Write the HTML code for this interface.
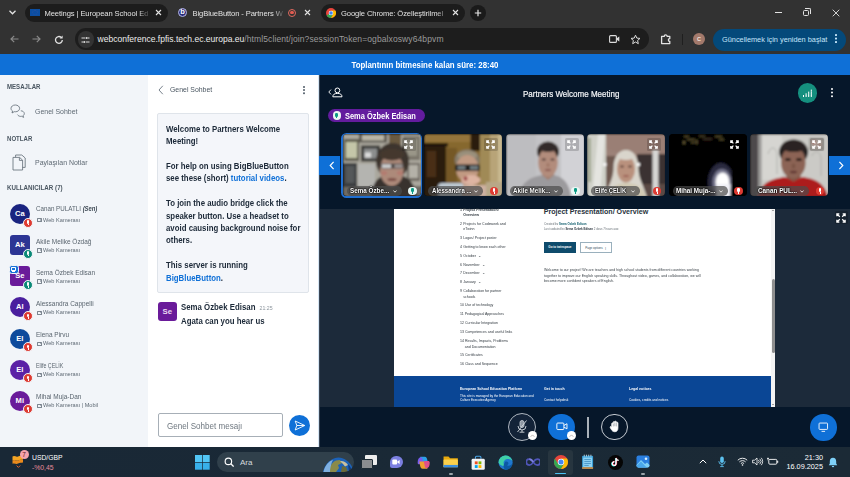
<!DOCTYPE html>
<html><head><meta charset="utf-8">
<style>
*{box-sizing:border-box;margin:0;padding:0}
html,body{width:850px;height:477px;overflow:hidden;background:#06172a;font-family:"Liberation Sans",sans-serif;}
.abs{position:absolute}
#root{position:relative;width:850px;height:477px;overflow:hidden}
/* chrome */
#tabs{left:0;top:0;width:850px;height:26px;background:#323232}
#tool{left:0;top:26px;width:850px;height:28px;background:#323232}
.tab{position:absolute;top:4px;height:18px;border-radius:9px;background:#1c1c1c}
.tt{position:absolute;font-size:7.6px;color:#e3e3e3;white-space:nowrap;top:9px;line-height:9px;letter-spacing:-0.1px}
#omni{left:75px;top:28.3px;width:574px;height:21.7px;border-radius:11px;background:#1d1d1d}
/* bbb */
#bluebar{left:0;top:53.5px;width:850px;height:21.3px;background:#0f70d7;color:#fff;font-size:9px;font-weight:bold;text-align:center;line-height:22.6px}
#users{left:0;top:75px;width:148px;height:372px;background:#f2f5f9}
#chat{left:148px;top:75px;width:171px;height:372px;background:#fff}
#main{left:319px;top:75px;width:531px;height:372px;background:#06172a}
.h{position:absolute;left:7px;font-size:7px;font-weight:bold;color:#4e5a66;letter-spacing:0.1px}
.it{position:absolute;left:35px;font-size:7.6px;color:#5b6670}
.un{position:absolute;left:36px;font-size:6.9px;color:#56616c;white-space:nowrap}
.us{position:absolute;left:36px;font-size:5.8px;color:#6c7782;white-space:nowrap}
.av{position:absolute;left:10px;width:19px;height:19px;border-radius:50%;color:#fff;font-size:7.5px;font-weight:bold;text-align:center;line-height:19px}
.bd{position:absolute;width:9px;height:9px;border-radius:50%;border:1px solid #f2f5f9}

.sx{display:inline-block;transform-origin:0 50%;white-space:nowrap}
.hd{position:absolute;left:7px;font-size:7.5px;line-height:9px;font-weight:bold;color:#4a5661}
.hd .sx{transform:scaleX(.81)}
.it{position:absolute;left:35px;font-size:7.6px;line-height:10px;color:#5e6973}
.it .sx{transform:scaleX(.915)}
.un{position:absolute;left:36.2px;font-size:7px;line-height:9px;color:#5a656f;white-space:nowrap}
.un .sx{transform:scaleX(.925)}
.us{position:absolute;left:43px;font-size:5.8px;line-height:8px;color:#5e6974;white-space:nowrap}
.us .sx{transform:scaleX(.97)}
.us:before{content:"";position:absolute;left:-6.5px;top:2.5px;width:3px;height:2.4px;border:0.55px solid #7d8791;border-radius:0.6px}
.us:after{content:"";position:absolute;left:-3px;top:3px;width:0;height:0;border:1.2px solid transparent;border-right-color:#6a7580;border-left:0}
.av{position:absolute;left:9.8px;width:20px;height:20px;border-radius:50%;color:#fff;font-size:7.6px;font-weight:bold;text-align:center;line-height:20px}
.av.m{border-radius:3px}
.bd{position:absolute;left:23.3px;width:10px;height:10px;border-radius:50%;border:1px solid #f2f5f9;background:#de3b32}
.bd.g{background:#0b8a78}
.bd:after{content:"";position:absolute;left:2.9px;top:1.5px;width:2.2px;height:3.6px;border-radius:1.1px;background:#fff}
.bd:before{content:"";position:absolute;left:3.65px;top:5.2px;width:0.7px;height:1.6px;background:#fff}
.ct{position:absolute;left:165.8px;font-size:8.4px;line-height:12.42px;font-weight:bold;color:#1c2938;white-space:nowrap}
.ct .sx{transform:scaleX(.935)}
.ct b{color:#0f70d7}

.vid{position:absolute;top:134.4px;width:78px;height:61.4px;border-radius:4px;overflow:hidden;background:#000}
.vid svg{position:absolute;left:0;top:0}
.vn{position:absolute;top:186.2px;font-size:7.6px;line-height:9px;font-weight:bold;color:#fff;white-space:nowrap;text-shadow:0 0 1.5px #000,0 0 1.5px #000,0 0 2px #000}
.vn .sx{transform:scaleX(.95)}
.fs{position:absolute;top:137.6px;width:14.4px;height:13.8px;border-radius:1.5px;background:rgba(0,0,0,.17)}
.mic{position:absolute;top:187px;width:8.4px;height:8.4px;border-radius:50%;background:#de3b32}
.mic.g{background:#e9f7f4}
.mic:after{content:"";position:absolute;left:2.9px;top:1.3px;width:2.6px;height:3.9px;border-radius:1.3px;background:#fff}
.mic.g:after{background:#0b9a84}
.mic:before{content:"";position:absolute;left:3.8px;top:5.2px;width:0.8px;height:1.8px;background:#fff}
.mic.g:before{background:#0b9a84}
.ab{position:absolute;border-radius:50%}

.nv{position:absolute;left:459.8px;font-size:14.2px;line-height:20px;color:#30383f;white-space:nowrap;transform:scale(.25);transform-origin:0 0}
.nv i{font-style:normal;display:inline-block;min-width:12.8px;padding-right:4px}
.pt{position:absolute;font-size:14.2px;line-height:20px;color:#3a4248;white-space:nowrap;transform:scale(.25);transform-origin:0 0}
.ft{position:absolute;font-size:12.6px;line-height:18.4px;color:#fff;white-space:nowrap;transform:scale(.25);transform-origin:0 0}

.tk{position:absolute;font-size:7.4px;line-height:9px;color:#fff;white-space:nowrap}
/* taskbar */
#task{left:0;top:447px;width:850px;height:30px;background:linear-gradient(90deg,#192836,#1b2a36)}
</style></head><body><div id="root">
<div id="tabs" class="abs"></div>
<div id="tool" class="abs"></div>
<div id="omni" class="abs"></div>
<!-- tab strip -->
<svg class="abs" style="left:8px;top:9px" width="9" height="7" viewBox="0 0 9 7"><path d="M1.5 1.8 L4.5 4.8 L7.5 1.8" stroke="#e3e3e3" stroke-width="1.3" fill="none"/></svg>
<div class="tab" style="left:25px;width:143px"></div>
<div class="abs" style="left:30px;top:9px;width:10px;height:7px;background:#0b4ea2"></div>
<div class="abs" style="left:32px;top:10px;width:6px;height:5px;border:1px dotted #274f9e;border-radius:50%"></div>
<div class="tt" style="left:44.5px;width:106px;overflow:hidden;-webkit-mask-image:linear-gradient(90deg,#000 88%,transparent)">Meetings | European School Ed</div>
<svg class="abs" style="left:155px;top:9px" width="7" height="7" viewBox="0 0 7 7"><path d="M1 1 L6 6 M6 1 L1 6" stroke="#e3e3e3" stroke-width="1.1"/></svg>

<div class="abs" style="left:178px;top:8px;width:9px;height:9px;border-radius:50%;background:#2a2d7c;border:1px solid #b9bbe6"></div>
<div class="abs" style="left:180.3px;top:7.4px;font-size:7.5px;font-weight:bold;color:#fff;line-height:9px">b</div>
<div class="tt" style="left:192.5px;width:92px;overflow:hidden;-webkit-mask-image:linear-gradient(90deg,#000 88%,transparent)">BigBlueButton - Partners W</div>
<div class="abs" style="left:288px;top:8.5px;width:8px;height:8px;border-radius:50%;border:1px solid #e06a5f"></div>
<div class="abs" style="left:290.3px;top:10.8px;width:3.4px;height:3.4px;border-radius:50%;background:#e35b50"></div>
<svg class="abs" style="left:304px;top:9px" width="7" height="7" viewBox="0 0 7 7"><path d="M1 1 L6 6 M6 1 L1 6" stroke="#e3e3e3" stroke-width="1.1"/></svg>

<div class="tab" style="left:321px;width:144px"></div>
<svg class="abs" style="left:326px;top:7.5px" width="10" height="10" viewBox="0 0 10 10"><circle cx="5" cy="5" r="5" fill="#e8453c"/><path d="M5 5 L0.7 7.5 A5 5 0 0 0 5 10 Z" fill="#34a853"/><path d="M0.7 7.5 A5 5 0 0 0 5 10 L7.5 5.6 L5 5Z" fill="#34a853"/><path d="M5 10 A5 5 0 0 0 9.35 2.5 L5 2.5 L7.2 6.2 Z" fill="#fbbc05"/><circle cx="5" cy="5" r="2.3" fill="#fff"/><circle cx="5" cy="5" r="1.8" fill="#4285f4"/></svg>
<div class="tt" style="left:341px;width:110px;overflow:hidden;-webkit-mask-image:linear-gradient(90deg,#000 86%,transparent)">Google Chrome: Özelleştirilmel</div>
<svg class="abs" style="left:452px;top:9px" width="7" height="7" viewBox="0 0 7 7"><path d="M1 1 L6 6 M6 1 L1 6" stroke="#e3e3e3" stroke-width="1.1"/></svg>
<div class="abs" style="left:469.5px;top:4.5px;width:16px;height:16px;border-radius:50%;background:#1a1a1a"></div>
<svg class="abs" style="left:473.5px;top:8.5px" width="8" height="8" viewBox="0 0 8 8"><path d="M4 0.8 V7.2 M0.8 4 H7.2" stroke="#e3e3e3" stroke-width="1.2"/></svg>
<!-- window controls -->
<div class="abs" style="left:775px;top:12px;width:7px;height:1px;background:#e3e3e3"></div>
<div class="abs" style="left:803px;top:9.5px;width:6px;height:6px;border:1px solid #e3e3e3;border-radius:1.5px"></div>
<div class="abs" style="left:804.5px;top:8px;width:6px;height:6px;border-top:1px solid #e3e3e3;border-right:1px solid #e3e3e3;border-radius:0 2px 0 0"></div>
<svg class="abs" style="left:832px;top:8.5px" width="8" height="8" viewBox="0 0 8 8"><path d="M0.7 0.7 L7.3 7.3 M7.3 0.7 L0.7 7.3" stroke="#e3e3e3" stroke-width="0.9"/></svg>
<!-- toolbar -->
<svg class="abs" style="left:9.5px;top:35px" width="9" height="8" viewBox="0 0 9 8"><path d="M4.2 0.8 L1 4 L4.2 7.2 M1 4 H8.5" stroke="#8a8a8a" stroke-width="1.2" fill="none"/></svg>
<svg class="abs" style="left:31.5px;top:35px" width="9" height="8" viewBox="0 0 9 8"><path d="M4.8 0.8 L8 4 L4.8 7.2 M8 4 H0.5" stroke="#8a8a8a" stroke-width="1.2" fill="none"/></svg>
<svg class="abs" style="left:53.5px;top:34.5px" width="10" height="10" viewBox="0 0 10 10"><path d="M8.3 5 A3.4 3.4 0 1 1 7.2 2.4" stroke="#e3e3e3" stroke-width="1.3" fill="none"/><path d="M5.6 3.4 H8.6 V0.4 Z" fill="#e3e3e3"/></svg>
<div class="abs" style="left:77.5px;top:31px;width:16.5px;height:16.5px;border-radius:50%;background:#333"></div>
<svg class="abs" style="left:81px;top:35.5px" width="9" height="8" viewBox="0 0 9 8"><path d="M0.5 2 H4 M6.8 2 H8.5 M0.5 6 H2 M5 6 H8.5" stroke="#dcdcdc" stroke-width="1.1"/><circle cx="5.6" cy="2" r="1.1" fill="#dcdcdc"/><circle cx="3.3" cy="6" r="1.1" fill="#dcdcdc"/></svg>
<div class="abs" style="left:97.5px;top:34px;font-size:8.55px;line-height:11px;color:#9a9a9a;white-space:nowrap"><span style="color:#ececec">webconference.fpfis.tech.ec.europa.eu</span><span style="letter-spacing:0.08px">/html5client/join?sessionToken=ogbalxoswy64bpvm</span></div>
<svg class="abs" style="left:609px;top:35px" width="11" height="8" viewBox="0 0 11 8"><rect x="0.6" y="0.6" width="6.8" height="6.8" rx="1" stroke="#dcdcdc" stroke-width="1.1" fill="none"/><path d="M7.6 3.2 L10.3 1.4 V6.6 L7.6 4.8Z" fill="#dcdcdc"/></svg>
<svg class="abs" style="left:629.5px;top:33.5px" width="11" height="11" viewBox="0 0 11 11"><path d="M5.5 1.2 L6.8 4.1 L10 4.4 L7.6 6.5 L8.3 9.7 L5.5 8 L2.7 9.7 L3.4 6.5 L1 4.4 L4.2 4.1 Z" stroke="#dcdcdc" stroke-width="1" fill="none" stroke-linejoin="round"/></svg>
<svg class="abs" style="left:660px;top:32.8px" width="12" height="12" viewBox="0 0 12 12"><path d="M1.6 3.4 H4.2 A1.5 1.5 0 0 1 7.2 3.4 H9.8 V5.6 A1.45 1.45 0 0 0 9.8 8.5 V10.6 H1.6 Z" stroke="#e3e3e3" stroke-width="1.3" fill="none" stroke-linejoin="round"/></svg>
<div class="abs" style="left:682px;top:33.5px;width:1px;height:11px;background:#1f1f1f"></div>
<div class="abs" style="left:693px;top:33px;width:12px;height:12px;border-radius:50%;background:#a3796b;color:#f2e4df;font-size:5.5px;text-align:center;line-height:12px;font-weight:bold">C</div>
<div class="abs" style="left:713px;top:28.5px;width:133px;height:22px;border-radius:11px;background:#04497a"></div>
<div class="abs" style="left:722px;top:34.5px;font-size:7.35px;line-height:10px;color:#c6e6fb;white-space:nowrap">Güncellemek için yeniden başlat</div>
<div class="abs" style="left:835.2px;top:34px;width:1.7px;height:1.7px;border-radius:50%;background:#c6e6fb;box-shadow:0 3.5px 0 #c6e6fb,0 7px 0 #c6e6fb"></div>

<div id="bluebar" class="abs"><span style="display:inline-block;transform:scaleX(.876)">Toplantının bitmesine kalan süre: 28:40</span></div>
<div id="users" class="abs"></div>
<div id="chat" class="abs"></div>

<div class="hd" style="top:81.8px"><span class="sx">MESAJLAR</span></div>
<svg class="abs" style="left:10px;top:103.5px" width="17" height="16" viewBox="0 0 17 16"><path d="M5.3 1 C2.8 1 1 2.5 1 4.4 C1 5.5 1.6 6.4 2.5 7 L2 9 L4.2 7.7 C4.6 7.8 5 7.8 5.3 7.8 C7.8 7.8 9.6 6.3 9.6 4.4 C9.6 2.5 7.8 1 5.3 1 Z" fill="none" stroke="#5e6973" stroke-width="0.8"/><path d="M10.8 6.8 C12.7 6.8 14.3 8 14.3 9.6 C14.3 10.5 13.8 11.2 13.1 11.7 L13.6 13.4 L11.7 12.3 C11.4 12.4 11.1 12.4 10.8 12.4 C9.2 12.4 8 11.6 7.5 10.6" fill="none" stroke="#5e6973" stroke-width="0.8"/></svg>
<div class="it" style="top:107px"><span class="sx">Genel Sohbet</span></div>
<div class="hd" style="top:134px"><span class="sx">NOTLAR</span></div>
<svg class="abs" style="left:12px;top:153.5px" width="15" height="17" viewBox="0 0 15 17"><path d="M3.6 3.2 V1 H9.8 L13.2 4 V13.4 H10.6" fill="none" stroke="#5e6973" stroke-width="0.8"/><path d="M1 3.4 H7.6 L10.6 6.2 V16 H1 Z M7.4 3.6 V6.4 H10.4" fill="none" stroke="#5e6973" stroke-width="0.8"/></svg>
<div class="it" style="top:157.5px"><span class="sx">Paylaşılan Notlar</span></div>
<div class="hd" style="top:182.5px"><span class="sx" style="transform:scaleX(.83)">KULLANICILAR (7)</span></div>

<div class="av" style="top:203.9px;background:#1a2480">Ca</div><div class="bd" style="top:217.5px"></div>
<div class="un" style="top:204.3px"><span class="sx" style="transform:scaleX(.89)">Canan PULATLI <i style="font-weight:bold;font-size:6.6px;color:#3f4a55">(Sen)</i></span></div><div class="us" style="top:215.5px"><span class="sx">Web Kamerası</span></div>

<div class="av m" style="top:235.1px;background:#2c3594">Ak</div><div class="bd g" style="top:248.7px"></div>
<div class="un" style="top:236.6px"><span class="sx">Akile Melike Özdağ</span></div><div class="us" style="top:245.8px"><span class="sx">Web Kamerası</span></div>

<div class="av m" style="top:266.2px;background:#6a1b9a">Se</div><div class="bd g" style="top:279.8px"></div>
<div class="abs" style="left:8.6px;top:264.8px;width:10px;height:9.6px;border-radius:2.5px;background:#1a73d9;border:1px solid #f2f5f9"></div>
<div class="abs" style="left:11.2px;top:267.4px;width:4.8px;height:3.4px;border:0.8px solid #fff;border-radius:0.8px"></div>
<div class="abs" style="left:12.4px;top:271.4px;width:2.4px;height:0.8px;background:#fff"></div>
<div class="un" style="top:267.9px"><span class="sx">Sema Özbek Edisan</span></div><div class="us" style="top:276.9px"><span class="sx">Web Kamerası</span></div>

<div class="av" style="top:297.4px;background:#4a1f9e">Al</div><div class="bd" style="top:311px"></div>
<div class="un" style="top:299px"><span class="sx">Alessandra Cappelli</span></div><div class="us" style="top:308px"><span class="sx">Web Kamerası</span></div>

<div class="av" style="top:328.5px;background:#0d4a9c">El</div><div class="bd" style="top:342.1px"></div>
<div class="un" style="top:330.2px"><span class="sx">Elena Pirvu</span></div><div class="us" style="top:339.2px"><span class="sx">Web Kamerası</span></div>

<div class="av" style="top:359.5px;background:#5b21a6">El</div><div class="bd" style="top:373.1px"></div>
<div class="un" style="top:361.2px"><span class="sx" style="transform:scaleX(0.76)">Elife ÇELİK</span></div><div class="us" style="top:370.2px"><span class="sx">Web Kamerası</span></div>

<div class="av" style="top:390.6px;background:#6a1b9a">Mi</div><div class="bd" style="top:404.2px"></div>
<div class="un" style="top:392.2px"><span class="sx">Mihai Muja-Dan</span></div><div class="us" style="top:401.3px"><span class="sx">Web Kamerası | Mobil</span></div>

<div class="abs" style="left:318px;top:75px;width:1px;height:372px;background:#d4e4f3"></div>
<svg class="abs" style="left:157.5px;top:85px" width="6" height="10" viewBox="0 0 6 10"><path d="M4.8 0.8 L1 5 L4.8 9.2" stroke="#6a7580" stroke-width="0.9" fill="none"/></svg>
<div class="abs" style="left:170px;top:84.8px;font-size:7.5px;line-height:10px;color:#4a5661;white-space:nowrap"><span class="sx" style="transform:scaleX(.92)">Genel Sohbet</span></div>
<div class="abs" style="left:303.3px;top:86px;width:1.6px;height:1.6px;border-radius:50%;background:#5f6a75;box-shadow:0 3.1px 0 #5f6a75,0 6.2px 0 #5f6a75"></div>
<div class="abs" style="left:156.5px;top:113.2px;width:152px;height:179.8px;background:#f4f6fa;border:1px solid #dfe4ea;border-radius:2px"></div>
<div class="ct" style="top:122.7px"><span class="sx">Welcome to Partners Welcome<br>Meeting!<br><br>For help on using BigBlueButton<br>see these (short) <b>tutorial videos</b>.<br><br>To join the audio bridge click the<br>speaker button. Use a headset to<br>avoid causing background noise for<br>others.<br><br>This server is running<br><b>BigBlueButton</b>.</span></div>
<div class="abs" style="left:157.6px;top:301.8px;width:19.4px;height:19.2px;border-radius:3px;background:#6a1b9a;color:#eadcf2;font-size:7.8px;font-weight:bold;text-align:center;line-height:19px">Se</div>
<div class="ct" style="left:181.4px;top:301px"><span class="sx">Sema Özbek Edisan <span style="font-weight:normal;font-size:5.6px;color:#8b949c;margin-left:2px">21:25</span></span></div>
<div class="ct" style="left:181.4px;top:315.2px"><span class="sx">Agata can you hear us</span></div>
<div class="abs" style="left:157.6px;top:413.3px;width:125.4px;height:23.4px;border:1px solid #a7afb7;border-radius:2px;background:#fff"></div>
<div class="abs" style="left:166.7px;top:421.3px;font-size:8.8px;line-height:10px;color:#6f7880;white-space:nowrap"><span class="sx" style="transform:scaleX(.915)">Genel Sohbet mesajı</span></div>
<div class="abs" style="left:289px;top:414.7px;width:21px;height:21px;border-radius:50%;background:#0f70d7"></div>
<svg class="abs" style="left:293.5px;top:419.5px" width="12" height="11" viewBox="0 0 12 11"><path d="M1.2 1 L10.8 5.5 L1.2 10 L2.8 5.5 Z M2.8 5.5 H10.5" fill="none" stroke="#fff" stroke-width="0.9" stroke-linejoin="round"/></svg>
<div id="main" class="abs"></div>

<div class="abs" style="left:319px;top:75px;width:1px;height:372px;background:#3a4654"></div>
<!-- top bar -->
<svg class="abs" style="left:328px;top:87px" width="15" height="11" viewBox="0 0 15 11"><path d="M3 2.6 L0.8 5 L3 7.4" stroke="#fff" stroke-width="0.9" fill="none"/><circle cx="9.4" cy="3.4" r="2.4" stroke="#fff" stroke-width="1" fill="none"/><path d="M4.8 9.8 C4.8 7.4 6.6 6.4 9.4 6.4 C12.2 6.4 14 7.4 14 9.8 Z" stroke="#fff" stroke-width="1" fill="none" stroke-linejoin="round"/></svg>
<div class="abs" style="left:471.5px;top:88.6px;width:200px;text-align:center;font-size:9px;line-height:10px;color:#f4f6f8;white-space:nowrap;-webkit-text-stroke:0.2px #f4f6f8"><span style="display:inline-block;transform:scaleX(.89)">Partners Welcome Meeting</span></div>
<div class="abs" style="left:797.5px;top:83px;width:19.6px;height:19.6px;border-radius:50%;background:#15907f"></div>
<div class="abs" style="left:802.6px;top:94.6px;width:1.6px;height:2.5px;background:#fff;box-shadow:2.6px -1.7px 0 #fff,2.6px 0 0 #fff,5.2px -3.4px 0 #fff,5.2px -1.7px 0 #fff,5.2px 0 0 #fff,7.8px -5.4px 0 #fff,7.8px -3.4px 0 #fff,7.8px -1.7px 0 #fff,7.8px 0 0 #fff"></div>
<div class="abs" style="left:831.4px;top:87.6px;width:2.1px;height:2.1px;border-radius:50%;background:#fff;box-shadow:0 3.6px 0 #fff,0 7.2px 0 #fff"></div>
<!-- talking pill -->
<div class="abs" style="left:328px;top:108.6px;width:97px;height:13.8px;border-radius:7px;background:#631c9e"></div>
<div class="abs" style="left:332.5px;top:111.4px;width:8.2px;height:8.2px;border-radius:50%;background:#eaf6f3"></div>
<div class="abs" style="left:335.3px;top:112.6px;width:2.6px;height:4px;border-radius:1.3px;background:#0b9a84"></div>
<div class="abs" style="left:336.2px;top:116.6px;width:0.8px;height:1.8px;background:#0b9a84"></div>
<div class="abs" style="left:345.4px;top:110.6px;font-size:9px;line-height:10px;font-weight:bold;color:#fff;white-space:nowrap"><span class="sx" style="transform:scaleX(.828)">Sema Özbek Edisan</span></div>
<!-- nav buttons -->
<div class="abs" style="left:319px;top:155.8px;width:21.3px;height:18.8px;background:#0f70d7"></div>
<svg class="abs" style="left:329px;top:160.5px" width="6" height="9" viewBox="0 0 6 9"><path d="M4.6 0.8 L1.2 4.5 L4.6 8.2" stroke="#fff" stroke-width="1.2" fill="none"/></svg>
<div class="abs" style="left:829px;top:155.8px;width:21px;height:18.8px;background:#0f70d7"></div>
<svg class="abs" style="left:838px;top:160.5px" width="6" height="9" viewBox="0 0 6 9"><path d="M1.4 0.8 L4.8 4.5 L1.4 8.2" stroke="#fff" stroke-width="1.2" fill="none"/></svg>
<div class="abs" style="left:340.9px;top:132.5px;width:81.4px;height:65px;border-radius:5.5px;border:2px solid #1f6ed0"></div><div class="vid" style="left:342.5px"><svg width="78.5" height="62.3" viewBox="0 0 78.5 62.3"><defs><filter id="bl1" x="-20%" y="-20%" width="140%" height="140%"><feGaussianBlur stdDeviation="1.1"/></filter></defs><g filter="url(#bl1)"><rect width="79" height="63" fill="#aaa79d"/><rect y="52" width="79" height="11" fill="#6e6a64"/>
<rect x="1" y="5" width="15" height="22" fill="#5b5a4c"/><rect x="3" y="8" width="11" height="16" fill="#c4c6a8"/>
<rect x="16" y="0" width="28" height="8.5" fill="#5a574f"/><rect x="19" y="1" width="22" height="5.5" fill="#b9b6a6"/>
<rect x="18" y="11.5" width="19" height="16" fill="#3b3a38"/><rect x="21" y="14.5" width="13" height="10" fill="#8c8e8e"/><rect x="22" y="18.5" width="6" height="5" fill="#dcdcdc"/>
<rect x="0" y="29" width="14" height="24" fill="#3a3d40"/><rect x="2.5" y="32" width="9" height="17" fill="#54585a"/>
<rect x="15" y="30" width="17" height="23" fill="#b4b4b0"/>
<rect x="46" y="0" width="12" height="12" fill="#6a5a40"/><rect x="60" y="2" width="17" height="24" fill="#7a766a"/><rect x="63" y="5" width="11" height="17" fill="#9a9688"/>
<rect x="64" y="29" width="13" height="18" fill="#6f6b62"/><rect x="66" y="31" width="9" height="13" fill="#b4b1a8"/>
<ellipse cx="49.5" cy="27" rx="16.5" ry="18" fill="#3e342e"/><path d="M28 63 C29 50 34 44 40 42 H60 C66 44 72 50 74 63 Z" fill="#38322e"/>
<ellipse cx="48.8" cy="36" rx="11.8" ry="16" fill="#ad8a7a"/><ellipse cx="49" cy="20.5" rx="12" ry="6" fill="#44382f"/>
<rect x="37.5" y="29.5" width="23" height="5" rx="2" fill="#4a4544"/><rect x="39" y="30.3" width="9" height="3.6" fill="#d0d0d2"/><rect x="51.5" y="30.5" width="8" height="3.2" fill="#a09896"/>
<ellipse cx="49" cy="45.5" rx="4.6" ry="1.5" fill="#7a4c44"/><ellipse cx="41" cy="39" rx="3" ry="2" fill="#b47a70"/><ellipse cx="57" cy="39" rx="3" ry="2" fill="#b47a70"/></g></svg></div><div class="fs" style="left:402.1px"></div><svg class="abs" style="left:404.4px;top:140.1px" width="9" height="9" viewBox="0 0 9 9"><path d="M0.8 3 V0.8 H3 M6 0.8 H8.2 V3 M8.2 6 V8.2 H6 M3 8.2 H0.8 V6 M0.8 0.8 L3.4 3.4 M8.2 0.8 L5.6 3.4 M8.2 8.2 L5.6 5.6 M0.8 8.2 L3.4 5.6" stroke="#fff" stroke-width="1.25" fill="none"/></svg><div class="abs" style="left:346.5px;top:186.2px;width:55px;height:9.6px;border-radius:4.8px;background:rgba(75,75,75,.7)"></div><div class="vn" style="left:350.1px"><span class="sx" style="transform:scaleX(0.83)">Sema Özbe...</span></div><svg class="abs" style="left:392.5px;top:190px" width="4" height="3" viewBox="0 0 4 3"><path d="M0.4 0.5 L2 2.2 L3.6 0.5" stroke="#fff" stroke-width="0.8" fill="none"/></svg><div class="mic g" style="left:408.3px"></div><div class="vid" style="left:424px"><svg width="78.5" height="62.3" viewBox="0 0 78.5 62.3"><defs><filter id="bl2" x="-20%" y="-20%" width="140%" height="140%"><feGaussianBlur stdDeviation="1.1"/></filter></defs><g filter="url(#bl2)"><rect width="79" height="63" fill="#86682e"/><rect x="0" y="0" width="79" height="8" fill="#94743a"/>
<rect x="0" y="10" width="22" height="53" fill="#2c1a0e"/><rect x="3" y="17" width="9" height="26" fill="#4a2e16"/><rect x="0" y="9" width="24" height="3.5" fill="#24150b"/>
<rect x="22" y="14" width="11" height="40" fill="#755828"/>
<rect x="46.5" y="0" width="10" height="17" fill="#2a1a10"/><rect x="56" y="0" width="23" height="63" fill="#a08a56"/><rect x="66" y="0" width="13" height="63" fill="#b8a478"/><rect x="74" y="0" width="5" height="63" fill="#c8b890"/>
<ellipse cx="43.3" cy="26" rx="12.5" ry="10.5" fill="#857b6a"/><ellipse cx="43.3" cy="21.5" rx="10" ry="4.5" fill="#9a907c"/>
<ellipse cx="43.3" cy="34.5" rx="11.3" ry="13.5" fill="#c19a82"/>
<rect x="31" y="30.5" width="25" height="6.5" rx="2" fill="#1e1c1c"/><rect x="33.5" y="32" width="8" height="3.6" fill="#727e82"/><rect x="46" y="32" width="8" height="3.6" fill="#727e82"/>
<rect x="37" y="45" width="13" height="10" fill="#b58e78"/>
<ellipse cx="47" cy="46" rx="9.5" ry="5" fill="#deb4a2"/><ellipse cx="41.5" cy="44.5" rx="2" ry="2.3" fill="#9e4a48"/>
<rect x="14" y="49" width="26" height="14" rx="4" fill="#bcc8d0"/><rect x="38" y="51" width="32" height="12" rx="4" fill="#cdb0a0"/>
<rect x="62" y="48" width="17" height="15" fill="#b8a888"/></g></svg></div><div class="fs" style="left:483.6px"></div><svg class="abs" style="left:485.9px;top:140.1px" width="9" height="9" viewBox="0 0 9 9"><path d="M0.8 3 V0.8 H3 M6 0.8 H8.2 V3 M8.2 6 V8.2 H6 M3 8.2 H0.8 V6 M0.8 0.8 L3.4 3.4 M8.2 0.8 L5.6 3.4 M8.2 8.2 L5.6 5.6 M0.8 8.2 L3.4 5.6" stroke="#fff" stroke-width="1.25" fill="none"/></svg><div class="abs" style="left:428px;top:186.2px;width:55px;height:9.6px;border-radius:4.8px;background:rgba(75,75,75,.7)"></div><div class="vn" style="left:431.6px"><span class="sx" style="transform:scaleX(0.8)">Alessandra ...</span></div><svg class="abs" style="left:474px;top:190px" width="4" height="3" viewBox="0 0 4 3"><path d="M0.4 0.5 L2 2.2 L3.6 0.5" stroke="#fff" stroke-width="0.8" fill="none"/></svg><div class="mic" style="left:489.8px"></div><div class="vid" style="left:505.5px"><svg width="78.5" height="62.3" viewBox="0 0 78.5 62.3"><defs><filter id="bl3" x="-20%" y="-20%" width="140%" height="140%"><feGaussianBlur stdDeviation="1.1"/></filter></defs><g filter="url(#bl3)"><rect width="79" height="63" fill="#c3c3c6"/><rect x="55" y="0" width="24" height="63" fill="#d2d2d6"/><rect x="0" y="0" width="30" height="63" fill="#bdbdc0"/>
<ellipse cx="42" cy="17.5" rx="11" ry="10" fill="#2e2622"/>
<rect x="36" y="38" width="12" height="9" fill="#a27e6e"/>
<ellipse cx="42" cy="28.5" rx="9.8" ry="14.5" fill="#b28c7c"/><ellipse cx="42" cy="13.5" rx="9" ry="4.5" fill="#33292a"/>
<ellipse cx="37.8" cy="25.5" rx="2.2" ry="1" fill="#4a3430"/><ellipse cx="46.5" cy="25.5" rx="2.2" ry="1" fill="#4a3430"/><ellipse cx="42" cy="36" rx="3.2" ry="1.1" fill="#8a5650"/><ellipse cx="42" cy="31" rx="1.6" ry="2.2" fill="#a07868"/>
<path d="M13 63 C15 46 27 43 36 41 L42 46 L48 41 C57 43 63 48 65 63 Z" fill="#9b9a9d"/></g></svg></div><div class="fs" style="left:565.1px"></div><svg class="abs" style="left:567.4px;top:140.1px" width="9" height="9" viewBox="0 0 9 9"><path d="M0.8 3 V0.8 H3 M6 0.8 H8.2 V3 M8.2 6 V8.2 H6 M3 8.2 H0.8 V6 M0.8 0.8 L3.4 3.4 M8.2 0.8 L5.6 3.4 M8.2 8.2 L5.6 5.6 M0.8 8.2 L3.4 5.6" stroke="#fff" stroke-width="1.25" fill="none"/></svg><div class="abs" style="left:509.5px;top:186.2px;width:53px;height:9.6px;border-radius:4.8px;background:rgba(75,75,75,.7)"></div><div class="vn" style="left:513.1px"><span class="sx" style="transform:scaleX(0.82)">Akile Melik...</span></div><svg class="abs" style="left:553.5px;top:190px" width="4" height="3" viewBox="0 0 4 3"><path d="M0.4 0.5 L2 2.2 L3.6 0.5" stroke="#fff" stroke-width="0.8" fill="none"/></svg><div class="mic g" style="left:571.3px"></div><div class="vid" style="left:587px"><svg width="78.5" height="62.3" viewBox="0 0 78.5 62.3"><defs><filter id="bl4" x="-20%" y="-20%" width="140%" height="140%"><feGaussianBlur stdDeviation="1.1"/></filter></defs><g filter="url(#bl4)"><rect width="79" height="63" fill="#6e5850"/><rect x="0" y="0" width="79" height="22" fill="#9c8278"/><path d="M18 0 H79 V22 C62 27 40 22 18 14 Z" fill="#9a7f74"/>
<rect x="50" y="20" width="29" height="34" fill="#3a3030"/><rect x="50" y="50" width="29" height="13" fill="#5a4a44"/>
<rect x="0" y="0" width="19" height="63" fill="#cfd0c8"/><rect x="1" y="4" width="3" height="44" fill="#a4aa94"/><path d="M11 0 H18 L13 63 H5 Z" fill="#e4e4e0"/>
<rect x="65.5" y="16" width="6" height="47" fill="#d6d6d4"/>
<path d="M39 16 C47 16 51.5 24 51.5 34 C51.5 44 56 50 60 63 H18 C22 50 26.5 44 26.5 34 C26.5 24 31 16 39 16 Z" fill="#d9d5cc"/>
<path d="M20 63 C22 54 30 49 39 49 C50 49 57 54 59 63 Z" fill="#d2cab4"/>
<ellipse cx="39" cy="35" rx="9" ry="13.5" fill="#b9917d"/><ellipse cx="39" cy="22.5" rx="8.5" ry="3.5" fill="#d9d5cc"/>
<ellipse cx="35" cy="32.5" rx="2" ry="0.9" fill="#5a3e34"/><ellipse cx="43" cy="32.5" rx="2" ry="0.9" fill="#5a3e34"/><ellipse cx="39" cy="42" rx="3" ry="1.1" fill="#9a5c52"/>
<circle cx="18" cy="30.5" r="1.7" fill="#fff"/><circle cx="51.5" cy="30.5" r="1.7" fill="#fff"/></g></svg></div><div class="fs" style="left:646.6px"></div><svg class="abs" style="left:648.9px;top:140.1px" width="9" height="9" viewBox="0 0 9 9"><path d="M0.8 3 V0.8 H3 M6 0.8 H8.2 V3 M8.2 6 V8.2 H6 M3 8.2 H0.8 V6 M0.8 0.8 L3.4 3.4 M8.2 0.8 L5.6 3.4 M8.2 8.2 L5.6 5.6 M0.8 8.2 L3.4 5.6" stroke="#fff" stroke-width="1.25" fill="none"/></svg><div class="abs" style="left:591px;top:186.2px;width:49px;height:9.6px;border-radius:4.8px;background:rgba(75,75,75,.7)"></div><div class="vn" style="left:594.6px"><span class="sx" style="transform:scaleX(0.76)">Elife ÇELİK</span></div><svg class="abs" style="left:631px;top:190px" width="4" height="3" viewBox="0 0 4 3"><path d="M0.4 0.5 L2 2.2 L3.6 0.5" stroke="#fff" stroke-width="0.8" fill="none"/></svg><div class="mic" style="left:652.8px"></div><div class="vid" style="left:668.5px"><svg width="78.5" height="62.3" viewBox="0 0 78.5 62.3"><defs><filter id="bl5" x="-20%" y="-20%" width="140%" height="140%"><feGaussianBlur stdDeviation="1.1"/></filter></defs><g filter="url(#bl5)"><rect width="79" height="63" fill="#020202"/>
<g fill="#5e5432"><rect x="15" y="2" width="5" height="1"/><rect x="18" y="5" width="8" height="1"/><rect x="30" y="1.5" width="6" height="1.2"/><rect x="34" y="4.5" width="9" height="1"/><rect x="46" y="2" width="7" height="1"/><rect x="22" y="8" width="4" height="1"/><rect x="50" y="5" width="5" height="1"/><rect x="14" y="7" width="2" height="3"/><rect x="27" y="6" width="1.5" height="4"/></g>
<ellipse cx="52" cy="48" rx="13" ry="19" fill="#2c2c40"/><ellipse cx="53" cy="49" rx="9.5" ry="14" fill="#77778f"/>
<ellipse cx="53.5" cy="48" rx="6.8" ry="9.5" fill="#ffffff"/><rect x="47.5" y="50" width="14" height="13" fill="#f0f0f6"/>
<rect x="62.4" y="20" width="17" height="43" fill="#020202"/></g></svg></div><div class="fs" style="left:728.1px"></div><svg class="abs" style="left:730.4px;top:140.1px" width="9" height="9" viewBox="0 0 9 9"><path d="M0.8 3 V0.8 H3 M6 0.8 H8.2 V3 M8.2 6 V8.2 H6 M3 8.2 H0.8 V6 M0.8 0.8 L3.4 3.4 M8.2 0.8 L5.6 3.4 M8.2 8.2 L5.6 5.6 M0.8 8.2 L3.4 5.6" stroke="#fff" stroke-width="1.25" fill="none"/></svg><div class="abs" style="left:672.5px;top:186.2px;width:55px;height:9.6px;border-radius:4.8px;background:rgba(75,75,75,.7)"></div><div class="vn" style="left:676.1px"><span class="sx" style="transform:scaleX(0.83)">Mihai Muja-...</span></div><svg class="abs" style="left:718.5px;top:190px" width="4" height="3" viewBox="0 0 4 3"><path d="M0.4 0.5 L2 2.2 L3.6 0.5" stroke="#fff" stroke-width="0.8" fill="none"/></svg><div class="mic" style="left:734.3px"></div><div class="vid" style="left:750px"><svg width="78.5" height="62.3" viewBox="0 0 78.5 62.3"><defs><filter id="bl6" x="-20%" y="-20%" width="140%" height="140%"><feGaussianBlur stdDeviation="1.1"/></filter></defs><g filter="url(#bl6)"><rect width="79" height="63" fill="#cbcac6"/><rect x="0" y="0" width="8.5" height="63" fill="#4e484c"/><rect x="8.5" y="0" width="3" height="63" fill="#9a9896"/>
<rect x="12" y="2" width="20" height="44" fill="#d6d5d1"/><path d="M18 20 C20 12 26 12 27 20 V40" stroke="#a8a8a4" stroke-width="0.8" fill="none"/><path d="M62 22 C64 16 70 16 71 24 V42" stroke="#a8a8a4" stroke-width="0.8" fill="none"/>
<rect x="59.5" y="4" width="14" height="12" fill="#8a8680"/><rect x="61" y="5.5" width="11" height="9" fill="#d4ccc4"/><rect x="62" y="6.5" width="4" height="4" fill="#c08a80"/><rect x="67" y="9" width="4" height="4" fill="#b89a90"/>
<ellipse cx="43.6" cy="18" rx="14.5" ry="12.5" fill="#282220"/>
<rect x="36.5" y="38" width="14" height="10" fill="#7e5648"/>
<ellipse cx="43.3" cy="28.5" rx="12.3" ry="16" fill="#8c6454"/><ellipse cx="43.6" cy="12.5" rx="12" ry="5.5" fill="#2a2220"/>
<ellipse cx="38" cy="25.5" rx="3" ry="1.5" fill="#2a1a18"/><ellipse cx="49" cy="25.5" rx="3" ry="1.5" fill="#2a1a18"/><ellipse cx="43.5" cy="38" rx="3.6" ry="1.3" fill="#5e3430"/><ellipse cx="43.5" cy="32" rx="1.8" ry="2.6" fill="#7a5446"/>
<path d="M8 63 C10 49 22 44.5 35 43 L43.5 47.5 L52 43 C65 44.5 75 49 78 63 Z" fill="#ad1e1e"/></g></svg></div><div class="fs" style="left:809.6px"></div><svg class="abs" style="left:811.9px;top:140.1px" width="9" height="9" viewBox="0 0 9 9"><path d="M0.8 3 V0.8 H3 M6 0.8 H8.2 V3 M8.2 6 V8.2 H6 M3 8.2 H0.8 V6 M0.8 0.8 L3.4 3.4 M8.2 0.8 L5.6 3.4 M8.2 8.2 L5.6 5.6 M0.8 8.2 L3.4 5.6" stroke="#fff" stroke-width="1.25" fill="none"/></svg><div class="abs" style="left:754px;top:186.2px;width:55px;height:9.6px;border-radius:4.8px;background:rgba(75,75,75,.7)"></div><div class="vn" style="left:757.6px"><span class="sx" style="transform:scaleX(0.835)">Canan PUL...</span></div><svg class="abs" style="left:800px;top:190px" width="4" height="3" viewBox="0 0 4 3"><path d="M0.4 0.5 L2 2.2 L3.6 0.5" stroke="#fff" stroke-width="0.8" fill="none"/></svg><div class="mic" style="left:815.8px"></div>
<div class="abs" style="left:320px;top:208.5px;width:530px;height:198.5px;background:#1c2a3a;overflow:hidden"></div>
<div class="abs" style="left:394px;top:208.5px;width:381.2px;height:198.5px;background:#fff;overflow:hidden">
<div class="abs" style="left:0;top:167.7px;width:377px;height:31px;background:#0a4695"></div>
<div class="abs" style="left:377px;top:0;width:4.2px;height:198.5px;background:#f4f4f4"></div>
<div class="abs" style="left:377.6px;top:70px;width:3px;height:74px;border-radius:1.5px;background:#8f8f8f"></div>
<div class="abs" style="left:378.2px;top:1.5px;width:0;height:0;border:1.2px solid transparent;border-bottom:1.6px solid #555;border-top:0"></div>
<div class="abs" style="left:378.2px;top:195px;width:0;height:0;border:1.2px solid transparent;border-top:1.6px solid #555;border-bottom:0"></div>
</div>
<div class="nv" style="top:207.0px;font-weight:bold;"><i>1</i>Project Presentation/</div><div class="nv" style="top:211.8px;font-weight:bold;"><i></i>Overview</div><div class="nv" style="top:220.8px;"><i>2</i>Projects for Codeweek and</div><div class="nv" style="top:225.6px;"><i></i>eTwinn</div><div class="nv" style="top:234.8px;"><i>3</i>Logos/ Project poster</div><div class="nv" style="top:244.0px;"><i>4</i>Getting to know each other</div><div class="nv" style="top:253.0px;"><i>5</i>October &nbsp;⌄</div><div class="nv" style="top:261.6px;"><i>6</i>November &nbsp;⌄</div><div class="nv" style="top:270.3px;"><i>7</i>December &nbsp;⌄</div><div class="nv" style="top:279.2px;"><i>8</i>January &nbsp;⌄</div><div class="nv" style="top:288.4px;"><i>9</i>Collaboration for partner</div><div class="nv" style="top:293.5px;"><i></i>schools</div><div class="nv" style="top:302.4px;"><i>10</i>Use of technology</div><div class="nv" style="top:311.0px;"><i>11</i>Pedagogical Approaches</div><div class="nv" style="top:320.0px;"><i>12</i>Curricular Integration</div><div class="nv" style="top:329.2px;"><i>13</i>Competences and useful links</div><div class="nv" style="top:338.1px;"><i>14</i>Results, Impacts, Problems</div><div class="nv" style="top:343.5px;"><i style="min-width:19px"></i>and Documentation</div><div class="nv" style="top:352.2px;"><i>15</i>Certificates</div><div class="nv" style="top:361.1px;"><i>16</i>Class and Sequence</div>
<div class="abs" style="left:543.7px;top:207.8px;font-size:7.1px;line-height:8px;font-weight:bold;color:#27323c;white-space:nowrap">Project Presentation/ Overview</div>
<div class="pt" style="left:543.7px;top:220.8px;color:#6a7278;font-size:11.6px">Created by <b style="color:#0a5a6a">Sema Özbek Edisan</b></div>
<div class="pt" style="left:543.7px;top:225.6px;color:#6a7278;font-size:11.6px">Last updated by <b style="color:#1f2a33">Sema Özbek Edisan</b> 2 days 7 hours ago</div>
<div class="abs" style="left:543.7px;top:241.6px;width:32.5px;height:11.4px;background:#0e4b6c;color:#fff;font-size:3px;line-height:11.4px;text-align:center;font-weight:bold">Go to twinspace</div>
<div class="abs" style="left:580.2px;top:241.6px;width:32.3px;height:11.4px;background:#fff;border:0.7px solid #9ab0bd;color:#38505e;font-size:3px;line-height:10px;text-align:center">Page options &nbsp;⋮</div>
<div class="pt" style="left:543.7px;top:267px">Welcome to our project! We are teachers and high school students from different countries working</div>
<div class="pt" style="left:543.7px;top:272.5px">together to improve our English speaking skills. Throughout video, games, and collaboration, we will</div>
<div class="pt" style="left:543.7px;top:277.6px">become more confident speakers of English.</div>
<div class="ft" style="left:459.8px;top:386.2px;font-weight:bold;font-size:14.1px">European School Education Platform</div>
<div class="ft" style="left:459.8px;top:393.7px">This site is managed by the European Education and</div>
<div class="ft" style="left:459.8px;top:398.3px">Culture Executive Agency</div>
<div class="ft" style="left:543.7px;top:386.2px;font-weight:bold;font-size:14.1px">Get in touch</div>
<div class="ft" style="left:543.7px;top:398.3px">Contact helpdesk</div>
<div class="ft" style="left:628.8px;top:386.2px;font-weight:bold;font-size:14.1px">Legal notices</div>
<div class="ft" style="left:628.8px;top:398.3px">Cookies, credits and notices</div>
<div class="abs" style="left:834.8px;top:211px;width:13px;height:13px;border-radius:1.5px;background:#16222f"></div>
<svg class="abs" style="left:836.3px;top:212.5px" width="10" height="10" viewBox="0 0 9 9"><path d="M0.8 3 V0.8 H3 M6 0.8 H8.2 V3 M8.2 6 V8.2 H6 M3 8.2 H0.8 V6 M0.8 0.8 L3.4 3.4 M8.2 0.8 L5.6 3.4 M8.2 8.2 L5.6 5.6 M0.8 8.2 L3.4 5.6" stroke="#fff" stroke-width="1.15" fill="none"/></svg>
<!-- action bar -->
<div class="abs" style="left:508.1px;top:412.8px;width:28.4px;height:28.4px;border-radius:50%;border:1.3px solid #aeb6bf;background:#132338"></div>
<svg class="abs" style="left:515.2px;top:419.2px" width="14" height="15" viewBox="0 0 14 15"><rect x="5" y="1.5" width="4" height="7" rx="2" stroke="#c3c9d0" stroke-width="0.9" fill="#8f98a3"/><path d="M3 7 A4 4 0 0 0 11 7 M7 11 V13 M4.6 13.2 H9.4" stroke="#d5dae0" stroke-width="0.9" fill="none"/><path d="M11.5 1.5 L2.5 13" stroke="#d5dae0" stroke-width="0.9"/></svg>
<div class="abs" style="left:527.8px;top:431px;width:9.4px;height:9.4px;border-radius:50%;background:#fff"></div>
<svg class="abs" style="left:530px;top:434px" width="5" height="4" viewBox="0 0 5 4"><path d="M0.6 2.8 L2.5 0.9 L4.4 2.8" stroke="#a09a96" stroke-width="0.7" fill="none"/></svg>
<div class="abs" style="left:548.2px;top:413.7px;width:26.6px;height:26.6px;border-radius:50%;background:#0f70d7"></div>
<svg class="abs" style="left:555.5px;top:422.3px" width="12" height="8.6" viewBox="0 0 14 10"><rect x="1" y="1.2" width="8.2" height="7.6" rx="1" stroke="#fff" stroke-width="1.1" fill="none"/><path d="M9.4 4 L12.8 2 V8 L9.4 6" stroke="#fff" stroke-width="1.1" fill="none" stroke-linejoin="round"/></svg>
<div class="abs" style="left:566.7px;top:431px;width:9.4px;height:9.4px;border-radius:50%;background:#fff"></div>
<svg class="abs" style="left:568.9px;top:434px" width="5" height="4" viewBox="0 0 5 4"><path d="M0.6 2.8 L2.5 0.9 L4.4 2.8" stroke="#a09a96" stroke-width="0.7" fill="none"/></svg>
<div class="abs" style="left:587.4px;top:416.6px;width:1.3px;height:21px;background:#aab2ba"></div>
<div class="abs" style="left:601px;top:413.6px;width:26.8px;height:26.8px;border-radius:50%;border:1.3px solid #c3c9d0"></div>
<svg class="abs" style="left:608.6px;top:420.4px" width="12" height="13" viewBox="0 0 14 15"><path d="M3.2 8.5 V4.2 A0.9 0.9 0 0 1 5 4.2 V7 V2.6 A0.9 0.9 0 0 1 6.8 2.6 V7 V2.2 A0.9 0.9 0 0 1 8.6 2.2 V7 V3.4 A0.9 0.9 0 0 1 10.4 3.4 V9.5 C10.4 12.2 8.8 13.6 6.8 13.6 C4.6 13.6 3.6 12.6 2.6 10.8 L1.4 8.6 C1 7.8 2 7.2 2.6 7.8 Z" stroke="#fff" stroke-width="0.9" fill="#fff" stroke-linejoin="round"/><path d="M5 4.2 V7.4 M6.8 2.8 V7.2 M8.6 3 V7.4" stroke="#06172a" stroke-width="0.35"/></svg>
<div class="abs" style="left:810.4px;top:414.2px;width:26.4px;height:26.4px;border-radius:50%;background:#0f70d7"></div>
<svg class="abs" style="left:818.4px;top:421.8px" width="10.6" height="10.6" viewBox="0 0 12 12"><rect x="1.2" y="1.2" width="9.6" height="7.2" rx="0.8" stroke="#fff" stroke-width="1" fill="none"/><path d="M4 10.6 H8" stroke="#fff" stroke-width="1"/></svg>

<div id="task" class="abs"></div>
<!-- widgets -->
<svg class="abs" style="left:11px;top:453px" width="14" height="16" viewBox="0 0 14 16"><path d="M1.5 3.6 C3.5 2 5 4.4 7 3.4 C9 2.4 10 3 12 2.4 V6.4 C10 7 9 6.4 7 7.4 C5 8.4 3.5 6 1.5 7.6 Z" fill="#f5a524"/><path d="M1.5 7.6 C3.5 6 5 8.4 7 7.4 C9 6.4 10 7 12 6.4 V9.6 C10 10.2 9 9.6 7 10.6 C5 11.6 3.5 9.6 1.5 10.8 Z" fill="#ea8a1c"/><path d="M5.6 12.6 L7.4 14.4 L9.2 12.6" stroke="#e0602a" stroke-width="1" fill="none"/></svg>
<div class="abs" style="left:19.5px;top:450.3px;width:9px;height:9px;border-radius:50%;background:#f4a3ab;color:#5a1524;font-size:6.4px;line-height:9px;text-align:center">7</div>
<div class="tk" style="left:32px;top:453.2px;font-size:6.8px">USD/GBP</div>
<div class="tk" style="left:32px;top:462.8px;font-size:6.8px;color:#e58c9b">-%0,45</div>
<!-- start -->
<div class="abs" style="left:195px;top:455px;width:6.6px;height:6.6px;background:#52c6f6;box-shadow:7.7px 0 0 #52c6f6,0 7.7px 0 #38b0ea,7.7px 7.7px 0 #38b0ea"></div>
<!-- search -->
<div class="abs" style="left:217.2px;top:452px;width:137px;height:20px;border-radius:10px;background:#30404b"></div>
<svg class="abs" style="left:224px;top:457px" width="10.4" height="10.4" viewBox="0 0 9 9"><circle cx="3.8" cy="3.8" r="2.8" stroke="#fff" stroke-width="1" fill="none"/><path d="M5.9 5.9 L8.3 8.3" stroke="#fff" stroke-width="1.1"/></svg>
<div class="tk" style="left:240px;top:457.8px;color:#d5dade;font-size:8px">Ara</div>
<svg class="abs" style="left:322px;top:452px" width="32" height="20" viewBox="0 0 32 20"><defs><clipPath id="sc"><path d="M0 0 H22 A10 10 0 0 1 22 20 H0 Z"/></clipPath><filter id="sb"><feGaussianBlur stdDeviation="0.45"/></filter></defs><g clip-path="url(#sc)" filter="url(#sb)"><ellipse cx="16.5" cy="27" rx="16.5" ry="21.5" fill="#1c62b8"/><path d="M1.5 20 C3 13 7 9 11 8 C9 11 9 14 10 20 Z" fill="#7fb0e0"/><path d="M8 20 C8 14 10 10 14 8.5 L18 8 L20 11 L16 13 L17 16 L14 20 Z" fill="#8a8a4a"/><path d="M18 9 C21 8.5 24 10 26 13 L23 14.5 L21 12 Z" fill="#c8c0a0"/><path d="M20 14 L24 15 L26 20 H19 Z" fill="#6a6a38"/><path d="M26 12 C29 15 30 18 30 20 H27 Z" fill="#123a78"/></g></svg>
<!-- task view -->
<div class="abs" style="left:365.4px;top:455.4px;width:11.3px;height:9.4px;background:#ececec;border-radius:1px"></div>
<div class="abs" style="left:361.4px;top:458.8px;width:11.6px;height:10px;background:#8a8d90;border-radius:1px;border:0.5px solid #1c2a33"></div>
<!-- chat -->
<div class="abs" style="left:389.5px;top:456px;width:13px;height:12px;border-radius:6px 6px 6px 2px;background:#7b7fe0"></div>
<svg class="abs" style="left:392px;top:459px" width="8" height="6" viewBox="0 0 8 6"><rect x="0.3" y="0.5" width="4.8" height="5" rx="1" fill="#fff"/><path d="M5.3 2.4 L7.6 1 V5 L5.3 3.6Z" fill="#fff"/></svg>
<!-- copilot -->
<svg class="abs" style="left:415.6px;top:454.6px" width="15.4" height="15.4" viewBox="0 0 14 14"><path d="M4 1.5 H8 C9.5 1.5 10 3 10.3 4.5 L11 8 H6 L5 4 C4.7 2.8 4.5 2 3.2 2.2 Z" fill="#2aa0e8"/><path d="M1.5 7 C1.5 4 2.5 2 4.5 2 C5.5 2 5.8 3 6 4 L7 8.5 H3 C2 8.5 1.5 8 1.5 7 Z" fill="#7a5cf0"/><path d="M10 12.5 H6 C4.5 12.5 4 11 3.7 9.5 L3 6 H8 L9 10 C9.3 11.2 9.5 12 10.8 11.8 Z" fill="#f0a030"/><path d="M12.5 7 C12.5 10 11.5 12 9.5 12 C8.5 12 8.2 11 8 10 L7 5.5 H11 C12 5.5 12.5 6 12.5 7 Z" fill="#e0508a"/></svg>
<!-- explorer -->
<svg class="abs" style="left:443.4px;top:455.2px" width="15.4" height="13.6" viewBox="0 0 14 13" preserveAspectRatio="none"><path d="M0.5 1.5 H5 L6.5 3 H13.5 V11.5 H0.5 Z" fill="#e8a90c"/><rect x="0.5" y="4.2" width="13" height="7.6" rx="0.6" fill="#fbd04c"/><rect x="0.5" y="9.5" width="13" height="2.3" fill="#3a8ee0"/></svg>
<div class="abs" style="left:449px;top:473.3px;width:4px;height:1.6px;border-radius:1px;background:#9aa4aa"></div>
<!-- store -->
<svg class="abs" style="left:470.8px;top:454.6px" width="14.4" height="15.4" viewBox="0 0 13 14"><path d="M4 3.5 V2.2 A1 1 0 0 1 5 1.2 H8 A1 1 0 0 1 9 2.2 V3.5" stroke="#4aa6e8" stroke-width="1" fill="none"/><rect x="0.5" y="3.5" width="12" height="10" rx="1.2" fill="#f1f3f5"/><rect x="3.4" y="5.8" width="2.6" height="2.6" fill="#f25022"/><rect x="6.8" y="5.8" width="2.6" height="2.6" fill="#7fba00"/><rect x="3.4" y="9.2" width="2.6" height="2.6" fill="#00a4ef"/><rect x="6.8" y="9.2" width="2.6" height="2.6" fill="#ffb900"/></svg>
<!-- edge -->
<svg class="abs" style="left:498.2px;top:454.6px" width="15.2" height="15.2" viewBox="0 0 14 14"><circle cx="7" cy="7" r="6.5" fill="#1f78d0"/><path d="M0.5 7 A6.5 6.5 0 0 1 13.4 5.8 C12 3.5 8 3 6 5 C4.5 6.5 5 9 7 10 C4 10.5 1.5 9.5 0.5 7 Z" fill="#3fd0a8"/><path d="M6.2 7.2 C6.4 5.8 8.6 5.6 9.4 6.8 C10 7.8 9.2 9 8 9.4 C10 10.4 12.4 9.6 13.4 7.6 C13.2 11 10.4 13.5 7 13.5 C4.8 12.6 4.6 9 6.2 7.2 Z" fill="#0c59a4"/></svg>
<!-- infinity -->
<svg class="abs" style="left:525.6px;top:458.2px" width="14.6" height="8.2" viewBox="0 0 16 9"><path d="M8 4.5 C6.5 2 5 1.2 3.6 1.2 A3.3 3.3 0 0 0 3.6 7.8 C5 7.8 6.5 7 8 4.5 C9.5 2 11 1.2 12.4 1.2 A3.3 3.3 0 0 1 12.4 7.8 C11 7.8 9.5 7 8 4.5 Z" stroke="#4f55b8" stroke-width="1.9" fill="none"/><path d="M8 4.5 C6.5 2 5 1.2 3.6 1.2" stroke="#7c80dc" stroke-width="1.9" fill="none"/></svg>
<!-- chrome active -->
<div class="abs" style="left:548.4px;top:449.5px;width:24.4px;height:25.6px;border-radius:3px;background:#27353f"></div>
<svg class="abs" style="left:553.7px;top:454.5px" width="14" height="14" viewBox="0 0 10 10"><circle cx="5" cy="5" r="5" fill="#e8453c"/><path d="M0.7 7.5 A5 5 0 0 0 5 10 L7.5 5.6 L5 5 L2.8 6.3 L0.67 2.5 A5 5 0 0 0 0.7 7.5Z" fill="#34a853"/><path d="M5 10 A5 5 0 0 0 9.33 2.5 L5 2.5 L7.2 6.2 Z" fill="#fbbc05"/><circle cx="5" cy="5" r="2.3" fill="#fff"/><circle cx="5" cy="5" r="1.8" fill="#4285f4"/></svg>
<div class="abs" style="left:555.4px;top:472.5px;width:10.6px;height:1.9px;border-radius:1px;background:#4cc2f4"></div>
<!-- notepad -->
<svg class="abs" style="left:581.3px;top:454.3px" width="13.2" height="15.4" viewBox="0 0 12 14"><rect x="1" y="1.5" width="10" height="12" rx="1" fill="#3aa0d8"/><rect x="2" y="3.2" width="8" height="8.6" fill="#8fd3f4"/><path d="M3 5 H9 M3 6.8 H9 M3 8.6 H9 M3 10.4 H7" stroke="#2a7cb4" stroke-width="0.6"/><rect x="1" y="12" width="10" height="1.5" fill="#d08a3a"/><path d="M3 0.6 V2.4 M5 0.6 V2.4 M7 0.6 V2.4 M9 0.6 V2.4" stroke="#d9e6ee" stroke-width="0.7"/></svg>
<!-- tiktok -->
<div class="abs" style="left:608px;top:454.6px;width:15px;height:15px;border-radius:50%;background:#050505"></div>
<svg class="abs" style="left:611.3px;top:457.2px" width="8.8" height="9.9" viewBox="0 0 8 9"><path d="M4.6 0.8 V6 A1.7 1.7 0 1 1 3 4.3" stroke="#2af0ea" stroke-width="1.2" fill="none" transform="translate(-0.4,0.3)"/><path d="M4.6 0.8 V6 A1.7 1.7 0 1 1 3 4.3" stroke="#fe2c55" stroke-width="1.2" fill="none" transform="translate(0.4,-0.2)"/><path d="M4.6 0.8 V6 A1.7 1.7 0 1 1 3 4.3 M4.6 1 C4.8 2.2 5.8 3 7 3" stroke="#fff" stroke-width="1.2" fill="none"/></svg>
<!-- photos -->
<svg class="abs" style="left:635.5px;top:455px" width="14" height="13" viewBox="0 0 14 13"><rect x="0.5" y="0.5" width="13" height="12" rx="2" fill="#2a7fe0"/><path d="M0.5 10 L5 5 L9 9 L11 7.4 L13.5 10 V10.5 A2 2 0 0 1 11.5 12.5 H2.5 A2 2 0 0 1 0.5 10.5 Z" fill="#7fd0f6"/><path d="M0.5 10.8 L5 6.4 L10.6 12.5 H2.5 A2 2 0 0 1 0.5 10.8Z" fill="#4aa8ec"/><circle cx="10" cy="3.8" r="1.3" fill="#d8f0ff"/></svg>
<div class="abs" style="left:640.5px;top:473.3px;width:4px;height:1.6px;border-radius:1px;background:#9aa4aa"></div>
<!-- tray -->
<svg class="abs" style="left:698.6px;top:459px" width="8" height="5" viewBox="0 0 8 5"><path d="M0.8 4.2 L4 1 L7.2 4.2" stroke="#fff" stroke-width="1" fill="none"/></svg>
<svg class="abs" style="left:718.4px;top:456px" width="8" height="12" viewBox="0 0 8 12"><rect x="2.2" y="0.6" width="3.6" height="6.4" rx="1.8" fill="#5cc0ee"/><path d="M0.8 5.2 A3.2 3.2 0 0 0 7.2 5.2 M4 8.4 V10.4 M2.2 10.6 H5.8" stroke="#5cc0ee" stroke-width="0.9" fill="none"/></svg>
<svg class="abs" style="left:736.5px;top:457px" width="11" height="9" viewBox="0 0 11 9"><path d="M0.8 3.2 A6.6 6.6 0 0 1 10.2 3.2 M2.4 4.9 A4.4 4.4 0 0 1 8.6 4.9 M3.9 6.5 A2.3 2.3 0 0 1 7.1 6.5" stroke="#fff" stroke-width="0.9" fill="none"/><circle cx="5.5" cy="8" r="0.8" fill="#fff"/></svg>
<svg class="abs" style="left:751.5px;top:457px" width="12" height="9" viewBox="0 0 12 9"><path d="M0.6 3.2 H2.6 L5 1 V8 L2.6 5.8 H0.6 Z" stroke="#fff" stroke-width="0.8" fill="none" stroke-linejoin="round"/><path d="M6.4 3 A2 2 0 0 1 6.4 6 M7.8 1.8 A3.8 3.8 0 0 1 7.8 7.2 M9.2 0.8 A5.4 5.4 0 0 1 9.2 8.2" stroke="#fff" stroke-width="0.8" fill="none"/></svg>
<svg class="abs" style="left:766.5px;top:457px" width="12" height="9" viewBox="0 0 12 9"><rect x="1.8" y="2.4" width="8" height="4.8" rx="1" stroke="#fff" stroke-width="0.9" fill="none"/><rect x="10.2" y="3.8" width="1" height="2" fill="#fff"/><path d="M1 0.8 V3.4 M0 1.4 H2 " stroke="#fff" stroke-width="0.8"/></svg>
<div class="tk" style="left:763px;width:60px;text-align:right;top:453px;font-size:7.3px">21:30</div>
<div class="tk" style="left:763px;width:60px;text-align:right;top:462px;font-size:7.3px">16.09.2025</div>
<svg class="abs" style="left:828px;top:456.5px" width="10" height="11" viewBox="0 0 10 11"><path d="M5 0.8 C2.8 0.8 1.8 2.4 1.8 4.4 V6.6 L0.8 8.2 H9.2 L8.2 6.6 V4.4 C8.2 2.4 7.2 0.8 5 0.8 Z" fill="#7ed0f8"/><path d="M3.8 9 A1.2 1.2 0 0 0 6.2 9 Z" fill="#7ed0f8"/></svg>

</div></body></html>
